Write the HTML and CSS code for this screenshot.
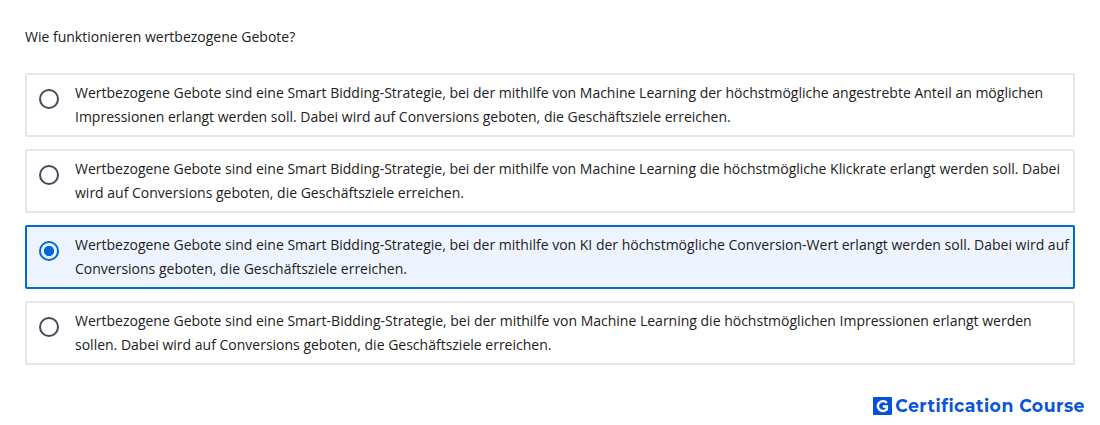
FILE: index.html
```html
<!DOCTYPE html>
<html lang="de">
<head>
    <meta charset="UTF-8">
    <meta name="viewport" content="width=device-width, initial-scale=1.0">
    <title>Wertbezogene Gebote</title>
    <link rel="stylesheet" href="styles.css">
</head>
<body>
    <div class="quiz">
        <p class="question">Wie funktionieren wertbezogene Gebote?</p>

        <div class="answers">
            <label class="answer">
                <input type="radio" name="answer">
                <span>Wertbezogene Gebote sind eine Smart Bidding-Strategie, bei der mithilfe von Machine Learning der höchstmögliche angestrebte Anteil an möglichen<br>Impressionen erlangt werden soll. Dabei wird auf Conversions geboten, die Geschäftsziele erreichen.</span>
            </label>
            <label class="answer">
                <input type="radio" name="answer">
                <span>Wertbezogene Gebote sind eine Smart Bidding-Strategie, bei der mithilfe von Machine Learning die höchstmögliche Klickrate erlangt werden soll. Dabei<br>wird auf Conversions geboten, die Geschäftsziele erreichen.</span>
            </label>
            <label class="answer selected">
                <input type="radio" name="answer" checked>
                <span>Wertbezogene Gebote sind eine Smart Bidding-Strategie, bei der mithilfe von KI der höchstmögliche Conversion-Wert erlangt werden soll. Dabei wird auf<br>Conversions geboten, die Geschäftsziele erreichen.</span>
            </label>
            <label class="answer">
                <input type="radio" name="answer">
                <span>Wertbezogene Gebote sind eine Smart-Bidding-Strategie, bei der mithilfe von Machine Learning die höchstmöglichen Impressionen erlangt werden<br>sollen. Dabei wird auf Conversions geboten, die Geschäftsziele erreichen.</span>
            </label>
        </div>

        <div class="brand">
            <svg class="brand-icon" width="19" height="18" viewBox="0 0 19 18">
                <rect width="19" height="18" rx="1" fill="#0552d6"/>
                <path d="M13.8 5.8A5.2 4.8 0 1 0 13.8 12.4V9.4H9.8" fill="none" stroke="#fff" stroke-width="2.5"/>
            </svg>
            <span class="brand-name">Certification Course</span>
        </div>
    </div>
</body>
</html>
```
FILE: styles.css
```css
* {
    box-sizing: border-box;
}
body {
    margin: 0;
    background: #fff;
    color: #212121;
    font-family: "Open Sans", sans-serif;
    font-size: 14px;
    line-height: 24px;
}
.quiz {
    width: 1100px;
    padding: 25px 25px 0;
}
.question {
    margin: 0 0 24px;
}
.answers {
    display: flex;
    flex-direction: column;
    gap: 12px;
}
.answer {
    display: flex;
    height: 64px;
    padding: 6px 0 0 12px;
    border: 2px solid #e6e6e6;
    border-radius: 2px;
    white-space: nowrap;
}
.answer.selected {
    border-color: #0068dc;
    background: #eef4ff;
}
.answer input {
    appearance: none;
    flex: none;
    width: 20px;
    height: 20px;
    margin: 8px 16px 0 0;
    border: 2px solid #434a59;
    border-radius: 50%;
}
.answer input:checked {
    border-color: #0068dc;
    background: radial-gradient(circle, #0068dc 4.8px, transparent 5.4px);
}
.brand {
    display: flex;
    align-items: center;
    justify-content: flex-end;
    gap: 3px;
    margin: 29px -10px 0 0;
    color: #0a56d8;
}
.brand-name {
    font-family: Montserrat, "Open Sans", sans-serif;
    font-size: 17.3px;
    font-weight: 700;
    letter-spacing: 0.48px;
}
```
